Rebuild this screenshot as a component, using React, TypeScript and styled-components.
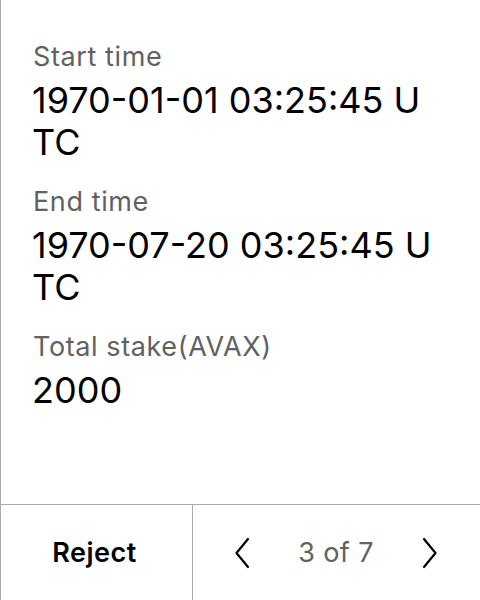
import React from "react";
import styled, { createGlobalStyle } from "styled-components";

const Global = createGlobalStyle`
  html, body { margin: 0; padding: 0; background: #fff; }
  body { font-family: Inter, "Noto Sans", sans-serif; }
  * { box-sizing: border-box; }
`;

const Screen = styled.div`
  width: 480px;
  height: 600px;
  display: flex;
  flex-direction: column;
  border-left: 1px solid #a9a9a9;
  background: #fff;
`;

const Details = styled.div`
  flex: 1;
  display: flex;
  flex-direction: column;
  gap: 23px;
  padding: 41px 40px 0 31px;
`;

const Field = styled.div`
  display: flex;
  flex-direction: column;
  gap: 6px;
`;

const Label = styled.div`
  font-size: 27px;
  line-height: 32px;
  letter-spacing: 0.6px;
  color: #616161;
  padding-left: 1px;
`;

const Value = styled.div`
  font-size: 36px;
  line-height: 42px;
  color: #000;
  word-break: break-all;
`;

const Footer = styled.div`
  height: 96px;
  border-top: 1px solid #a9a9a9;
  display: grid;
  grid-template-columns: 192px 1fr;
`;

const RejectButton = styled.button`
  all: unset;
  box-sizing: border-box;
  display: flex;
  align-items: center;
  justify-content: center;
  border-right: 1px solid #a9a9a9;
  font-family: Inter, sans-serif;
  font-weight: 600;
  font-size: 27px;
  letter-spacing: 0.5px;
  color: #000;
  padding-right: 4px;
`;

const Pager = styled.div`
  display: flex;
  align-items: center;
  justify-content: space-between;
  padding: 0 40px 0 39px;
`;

const Arrow = styled.button`
  all: unset;
  display: flex;
  align-items: center;
  justify-content: center;
  width: 20px;
  height: 40px;
`;

const Count = styled.div`
  font-size: 27px;
  letter-spacing: 0.4px;
  color: #616161;
`;

const Chevron = ({ dir }: { dir: "left" | "right" }) => (
  <svg width="16" height="32" viewBox="0 0 16 32" fill="none">
    <path
      d={dir === "left" ? "M14 2 L2.5 16 L14 30" : "M2 2 L13.5 16 L2 30"}
      stroke="#000"
      strokeWidth="2.2"
      strokeLinecap="round"
      strokeLinejoin="round"
    />
  </svg>
);

const fields = [
  { label: "Start time", value: "1970-01-01 03:25:45 UTC" },
  { label: "End time", value: "1970-07-20 03:25:45 UTC" },
  { label: "Total stake(AVAX)", value: "2000" },
];

export default function App() {
  return (
    <>
      <Global />
      <Screen>
        <Details>
          {fields.map((f) => (
            <Field key={f.label}>
              <Label>{f.label}</Label>
              <Value>{f.value}</Value>
            </Field>
          ))}
        </Details>
        <Footer>
          <RejectButton>Reject</RejectButton>
          <Pager>
            <Arrow>
              <Chevron dir="left" />
            </Arrow>
            <Count>3 of 7</Count>
            <Arrow>
              <Chevron dir="right" />
            </Arrow>
          </Pager>
        </Footer>
      </Screen>
    </>
  );
}
